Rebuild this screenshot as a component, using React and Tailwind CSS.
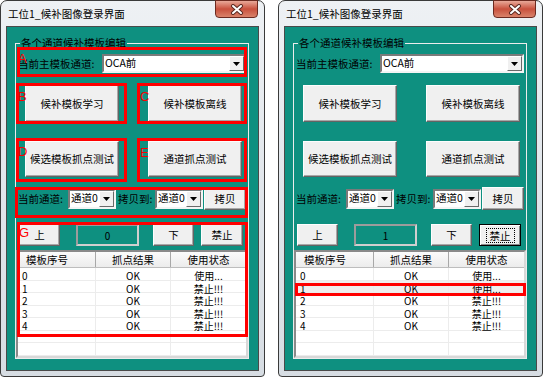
import React from 'react';

const rowsLeft = ['使用...', '禁止!!!', '禁止!!!', '禁止!!!', '禁止!!!'];
const rowsRight = ['使用...', '使用...', '禁止!!!', '禁止!!!', '禁止!!!'];

const Btn = ({ children, className = '', focused = false }) => (
  <div
    className={`flex items-center justify-center bg-[#f0f0f0] text-[10.5px] text-black ${
      focused
        ? 'border border-black shadow-[inset_1px_1px_0_#fff,inset_-1px_-1px_0_#8a8a8a]'
        : 'border border-t-[#fdfdfd] border-l-[#fdfdfd] border-r-[#646464] border-b-[#646464] shadow-[inset_-1px_-1px_0_#a8a8a8]'
    } ${className}`}
  >
    {focused ? (
      <span className="px-[3px] border border-dotted border-black leading-[13px]">{children}</span>
    ) : (
      children
    )}
  </div>
);

const DropBtn = () => (
  <div className="w-[15px] flex items-center justify-center bg-[#f0f0f0] border border-t-white border-l-white border-r-[#696969] border-b-[#696969]">
    <svg width="7" height="4" viewBox="0 0 7 4">
      <polygon points="0,0 7,0 3.5,4" fill="#000" />
    </svg>
  </div>
);

const Combo = ({ value, className = '' }) => (
  <div
    className={`flex bg-white border-2 border-t-[#7a7a7a] border-l-[#7a7a7a] border-r-[#f4f4f4] border-b-[#f4f4f4] ${className}`}
  >
    <span className="flex-1 flex items-center pl-[1px] text-[10.5px] leading-none overflow-hidden whitespace-nowrap">
      {value}
    </span>
    <DropBtn />
  </div>
);

const Mark = ({ className }) => (
  <div className={`absolute border-[3px] border-[#ff0000] pointer-events-none ${className}`} />
);

const Letter = ({ children, className }) => (
  <span className={`absolute text-[13px] leading-none text-[#ff0000] font-['Liberation_Sans',sans-serif] ${className}`}>
    {children}
  </span>
);

const Window = ({ annotated }) => {
  const rows = annotated ? rowsLeft : rowsRight;
  return (
    <div className="relative w-[265px] h-[377px] shrink-0 flex flex-col px-[5px] pb-[5px] border border-[#3a3a3a] rounded-t-[7px] rounded-b-[4px] bg-gradient-to-b from-[#eef1f4] via-[#e1e6eb] to-[#d7dde3]">
      {/* title bar */}
      <div className="h-[25px] flex items-center">
        <span className="pl-[2px] text-[10.5px] text-black">工位1_候补图像登录界面</span>
      </div>

      {/* close button */}
      <div className="absolute left-[214px] -top-px w-[43px] h-[18px] rounded-b-[4px] border border-[#6b2a20] bg-gradient-to-b from-[#e8a899] via-[#c8503d] to-[#d9826a] flex items-center justify-center">
        <svg width="14" height="11" viewBox="0 0 14 11">
          <path d="M3 2 L11 9 M11 2 L3 9" stroke="#5a2a22" strokeWidth="4" strokeLinecap="round" />
          <path d="M3 2 L11 9 M11 2 L3 9" stroke="#fff" strokeWidth="2" strokeLinecap="round" />
        </svg>
      </div>

      {/* client area */}
      <div className="flex-1 bg-[#0e9080] border border-[#4a4a4a] pl-[8px] pt-[16px]">
        <div className="relative w-[234px] h-[316px] border border-[#ececec] flex flex-col">
          <span className="absolute left-[4px] -top-[8px] px-[1px] bg-[#0e9080] text-[10.5px] leading-[14px] text-black">
            各个通道候补模板编辑
          </span>

          {/* main channel */}
          <div className="mt-[10px] h-[19px] flex items-center justify-between pl-[2px] pr-[2px]">
            <span className="text-[10.5px] text-black">当前主模板通道:</span>
            <Combo value="OCA前" className="w-[144px] h-[19px]" />
          </div>

          <div className="mt-[12px] h-[37px] flex pl-[9px] gap-[29px]">
            <Btn className="w-[94px]">候补模板学习</Btn>
            <Btn className="w-[94px]">候补模板离线</Btn>
          </div>

          <div className="mt-[19px] h-[36px] flex pl-[9px] gap-[29px]">
            <Btn className="w-[94px]">候选模板抓点测试</Btn>
            <Btn className="w-[94px]">通道抓点测试</Btn>
          </div>

          {/* copy row */}
          <div className="mt-[10px] h-[23px] flex items-center pl-[2px]">
            <span className="w-[50px] text-[10.5px] text-black whitespace-nowrap">当前通道:</span>
            <Combo value="通道0" className="w-[48px] h-[20px]" />
            <span className="w-[39px] pl-[2px] text-[10.5px] text-black whitespace-nowrap">拷贝到:</span>
            <Combo value="通道0" className="w-[48px] h-[20px]" />
            <Btn className="ml-[1px] w-[42px] h-[23px]">拷贝</Btn>
          </div>

          {/* navigation row */}
          <div className="mt-[14px] h-[22px] flex items-stretch">
            <Btn className="ml-[3px] w-[41px]">上</Btn>
            <div className="ml-[16px] w-[63px] flex justify-center pt-[2px] border-2 border-t-[#9c9c9c] border-l-[#9c9c9c] border-r-[#cfcfcf] border-b-[#cfcfcf] text-[10px] text-black">
              {annotated ? '0' : '1'}
            </div>
            <Btn className="ml-[14px] w-[41px]">下</Btn>
            <Btn className="ml-[7px] w-[42px]" focused={!annotated}>禁止</Btn>
          </div>

          {/* list */}
          <div className="mt-[4px] flex-1 bg-white border-2 border-t-[#8a8a8a] border-l-[#8a8a8a] border-r-[#d8d8d8] border-b-[#d8d8d8] overflow-hidden">
            <div className="flex h-[16px] bg-gradient-to-b from-[#fbfbfb] to-[#ececec] border-b border-[#bdbdbd] text-[10.5px] leading-[15px] text-black">
              <div className="w-[78px] pl-[8px] border-r border-[#a8a8a8]">模板序号</div>
              <div className="w-[75px] text-center border-r border-[#a8a8a8]">抓点结果</div>
              <div className="flex-1 text-center">使用状态</div>
            </div>
            {[0, 1, 2, 3, 4, 5, 6].map((i) => (
              <div
                key={i}
                className={`flex h-[12.5px] border-b border-[#ececec] text-[10px] leading-[13px] text-black ${
                  !annotated && i === 1 ? 'bg-[#efefef]' : ''
                }`}
              >
                <div className="w-[78px] pl-[4px] pt-[1px] border-r border-[#ececec]">{i < 5 ? i : ''}</div>
                <div className="w-[75px] pt-[1px] text-center border-r border-[#ececec]">{i < 5 ? 'OK' : ''}</div>
                <div className="flex-1 pt-[1px] text-center">{i < 5 ? rows[i] : ''}</div>
              </div>
            ))}
          </div>
        </div>
      </div>

      {annotated ? (
        <>
          <Mark className="left-[16px] top-[46px] w-[230px] h-[30px]" />
          <Mark className="left-[15px] top-[82px] w-[111px] h-[41px]" />
          <Mark className="left-[136px] top-[82px] w-[110px] h-[41px]" />
          <Mark className="left-[15px] top-[137px] w-[111px] h-[44px]" />
          <Mark className="left-[136px] top-[137px] w-[110px] h-[44px]" />
          <Mark className="left-[14px] top-[186px] w-[233px] h-[31px]" />
          <Mark className="left-[16px] top-[221px] w-[231px] h-[115px]" />
          <Letter className="left-[17px] top-[51px]">A</Letter>
          <Letter className="left-[17px] top-[89px]">B</Letter>
          <Letter className="left-[139px] top-[89px]">C</Letter>
          <Letter className="left-[17px] top-[144px]">D</Letter>
          <Letter className="left-[139px] top-[145px]">E</Letter>
          <Letter className="left-[18px] top-[225px]">G</Letter>
        </>
      ) : (
        <Mark className="left-[16px] top-[282px] w-[231px] h-[13px]" />
      )}
    </div>
  );
};

export default function App() {
  return (
    <div className="w-[543px] h-[378px] bg-white flex gap-[13px] font-['Noto_Sans_CJK_SC',sans-serif] overflow-hidden">
      <Window annotated />
      <Window />
    </div>
  );
}
